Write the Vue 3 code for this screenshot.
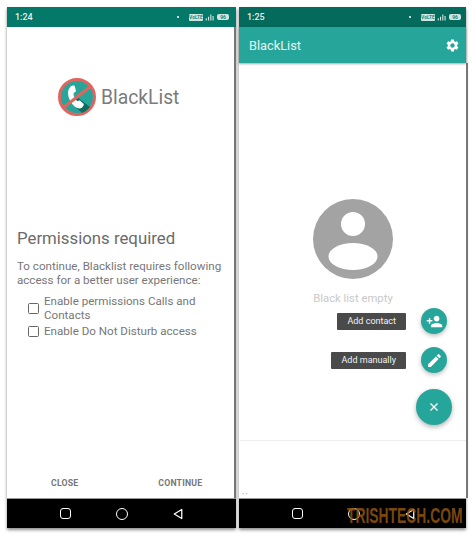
<script setup>
  const permissions = [
    'Enable permissions Calls and Contacts',
    'Enable Do Not Disturb access'
  ];

  const fabActions = [
    { label: 'Add contact', icon: 'person' },
    { label: 'Add manually', icon: 'pencil' }
  ];
</script>

<template>
  <main class="page">
    <section class="phone phone-left">
      <header class="status">
        <span class="time">1:24</span>
        <span class="status-icons">
          <i class="dot"></i>
          <i class="volte">VoLTE</i>
          <svg class="signal" viewBox="0 0 12 10"><path d="M1 9h1.500V6H1zM4 9h1.500V4H4zM7 9h1.500V1H7zM10 9h1.500V3H10z" fill="#cfe5e0"/></svg>
          <i class="battery">96</i>
        </span>
      </header>

      <div class="perm-body">
        <div class="brand">
          <svg class="logo" viewBox="0 0 38 38">
            <circle cx="19" cy="19" r="17.500" fill="#26a69a" stroke="#e0655f" stroke-width="3"/>
            <path d="M19 19 L32 29 A17 17 0 0 1 24 35 L12 24 Z" fill="#0c6e60"/>
            <path d="M12.500 8.500c1.500-1 3.500-1.300 4.200-.6l1.200 4.800c.1.700-.4 1.200-2.200 2.300-.6 2 1 6 3.500 8 1.800-.7 2.500-.8 3-.3l3.600 3.400c.2 1-.6 2.700-2 3.700-2 1.300-5 .8-8-2-3.800-3.700-6-9-5.700-14 .1-1.800 1-3.400 2.400-5.300z" fill="#fff"/>
            <path d="M5.500 29.500 L32.500 8.500" stroke="#e0655f" stroke-width="3"/>
          </svg>
          <span class="brand-name">BlackList</span>
        </div>

        <h1 class="perm-title">Permissions required</h1>
        <p class="perm-text">To continue, Blacklist requires following access for a better user experience:</p>

        <ul class="perm-list">
          <li v-for="item in permissions" :key="item" class="perm-item">
            <span class="checkbox"></span>
            <span>{{ item }}</span>
          </li>
        </ul>

        <div class="perm-actions">
          <span>CLOSE</span>
          <span>CONTINUE</span>
        </div>
      </div>

      <nav class="navbar">
        <span class="nav-square"></span>
        <span class="nav-circle"></span>
        <svg class="nav-back" viewBox="0 0 12 14"><path d="M10.500 1.500v11L1.500 7z" fill="none" stroke="#fff" stroke-width="1.500" stroke-linejoin="round"/></svg>
      </nav>
    </section>

    <section class="phone phone-right">
      <header class="status status-dim">
        <span class="time">1:25</span>
        <span class="status-icons">
          <i class="dot"></i>
          <i class="volte">VoLTE</i>
          <svg class="signal" viewBox="0 0 12 10"><path d="M1 9h1.500V6H1zM4 9h1.500V4H4zM7 9h1.500V1H7zM10 9h1.500V3H10z" fill="#cfe5e0"/></svg>
          <i class="battery">96</i>
        </span>
      </header>

      <div class="appbar">
        <span class="appbar-title">BlackList</span>
        <svg class="gear" viewBox="0 0 24 24"><path fill="#fff" d="M19.140 12.940c.04-.3.060-.61.060-.94s-.02-.64-.07-.94l2.030-1.580a.49.490 0 0 0 .12-.61l-1.920-3.320a.49.490 0 0 0-.59-.22l-2.390.96a7.030 7.030 0 0 0-1.620-.94l-.36-2.540a.48.480 0 0 0-.48-.41h-3.840a.47.470 0 0 0-.47.410l-.36 2.540c-.59.240-1.130.57-1.620.94l-2.390-.96a.48.480 0 0 0-.59.220L2.740 8.870a.47.470 0 0 0 .12.610l2.030 1.580c-.05.3-.09.630-.09.940s.02.640.07.940l-2.030 1.580a.49.490 0 0 0-.12.610l1.920 3.320c.12.220.37.290.59.220l2.390-.96c.5.380 1.030.7 1.620.94l.36 2.540c.05.240.24.410.48.410h3.840c.24 0 .44-.17.470-.41l.36-2.540c.59-.24 1.130-.56 1.620-.94l2.390.96c.22.080.47 0 .59-.22l1.920-3.320a.47.470 0 0 0-.12-.61l-2.010-1.580zM12 15.600A3.610 3.610 0 0 1 8.400 12c0-1.980 1.620-3.600 3.600-3.600s3.600 1.620 3.600 3.600-1.620 3.600-3.600 3.600z"/></svg>
      </div>

      <div class="list-body">
        <svg class="avatar" viewBox="0 0 80 80">
          <circle cx="40" cy="40" r="40" fill="#a3a3a3"/>
          <circle cx="40" cy="25" r="12" fill="#fff"/>
          <ellipse cx="40" cy="57.500" rx="24.500" ry="13.500" fill="#fff"/>
        </svg>
        <p class="empty-text">Black list empty</p>

        <div class="fab-menu">
          <div v-for="action in fabActions" :key="action.label" class="fab-row">
            <span class="chip">{{ action.label }}</span>
            <span class="fab-mini">
              <svg v-if="action.icon === 'person'" viewBox="0 0 24 24"><path fill="#fff" d="M15 12c2.200 0 4-1.800 4-4s-1.800-4-4-4-4 1.800-4 4 1.800 4 4 4zm-9-2V7H4v3H1v2h3v3h2v-3h3v-2H6zm9 4c-2.700 0-8 1.300-8 4v2h16v-2c0-2.700-5.300-4-8-4z"/></svg>
              <svg v-else viewBox="0 0 24 24"><path fill="#fff" d="M3 17.250V21h3.750L17.810 9.940l-3.750-3.750L3 17.250zM20.710 7.040a1 1 0 0 0 0-1.410l-2.340-2.340a1 1 0 0 0-1.410 0l-1.830 1.830 3.750 3.750 1.830-1.830z"/></svg>
            </span>
          </div>
          <span class="fab-main">
            <svg viewBox="0 0 24 24"><path d="M6 6l12 12M18 6L6 18" stroke="#fff" stroke-width="2.400"/></svg>
          </span>
        </div>

        <div class="list-foot">
          <span class="foot-dots">• •</span>
        </div>
      </div>

      <nav class="navbar">
        <span class="nav-square"></span>
        <span class="nav-circle"></span>
        <svg class="nav-back" viewBox="0 0 12 14"><path d="M10.500 1.500v11L1.500 7z" fill="none" stroke="#fff" stroke-width="1.500" stroke-linejoin="round"/></svg>
        <span class="watermark">TRISHTECH.COM</span>
      </nav>
    </section>
  </main>
</template>

<style scoped>
  .page {
    width: 474px;
    height: 536px;
    box-sizing: border-box;
    padding: 7px 8px 8px 7px;
    display: flex;
    background: #fff;
    font-family: Roboto, "Liberation Sans", sans-serif;
    overflow: hidden;
  }

  .phone {
    display: flex;
    flex-direction: column;
    height: 521px;
    background: #fff;
    box-shadow: 0 2px 3px rgba(0, 0, 0, 0.45);
  }

  .phone-left {
    width: 229px;
  }

  .phone-right {
    width: 227px;
    margin-left: 3px;
    position: relative;
  }

  .status {
    height: 20px;
    flex: none;
    display: flex;
    align-items: center;
    justify-content: space-between;
    padding: 0 7px 0 8px;
    background: #04796a;
    color: #e4f1ee;
    font-size: 9px;
    font-weight: 500;
  }

  .status-dim {
    background: #036a5c;
    padding: 0 5px 0 8px;
  }

  .status-icons {
    display: flex;
    align-items: center;
    gap: 2px;
  }

  .dot {
    width: 2px;
    height: 2px;
    margin-right: 8px;
    border-radius: 50%;
    background: #fff;
  }

  .volte {
    width: 14px;
    height: 7px;
    font-size: 5px;
    line-height: 7px;
    font-style: normal;
    text-align: center;
    overflow: hidden;
    color: #04796a;
    background: #cfe5e0;
    border-radius: 1px;
  }

  .signal {
    width: 9px;
    height: 9px;
  }

  .battery {
    width: 12px;
    height: 6px;
    margin-left: 1px;
    font-size: 5px;
    line-height: 6px;
    font-style: normal;
    text-align: center;
    color: #04796a;
    background: #cfe5e0;
    border-radius: 2px;
  }

  .perm-body {
    flex: 1;
    display: flex;
    flex-direction: column;
    border-right: 2px solid #777;
    padding: 51px 0 0 10px;
    color: #6e6e6e;
  }

  .brand {
    display: flex;
    align-items: center;
    gap: 5px;
    margin-left: 41px;
    height: 38px;
  }

  .logo {
    width: 38px;
    height: 38px;
  }

  .brand-name {
    font-size: 19.300px;
    color: #7b7b7b;
  }

  .perm-title {
    margin: 111px 0 0;
    font-size: 16.800px;
    font-weight: 400;
    line-height: 22px;
    color: #6b6b6b;
  }

  .perm-text {
    margin: 11px 0 0;
    width: 212px;
    font-size: 11.600px;
    line-height: 13.500px;
    color: #777;
  }

  .perm-list {
    list-style: none;
    margin: 8px 0 0;
    padding: 0 0 0 11px;
    font-size: 11.600px;
    line-height: 13.500px;
    color: #777;
  }

  .perm-item {
    display: flex;
    align-items: center;
    gap: 5px;
    margin-bottom: 3px;
    width: 172px;
  }

  .checkbox {
    width: 9px;
    height: 9px;
    flex: none;
    border: 1.500px solid #666;
    border-radius: 1.500px;
  }

  .perm-actions {
    margin-top: auto;
    height: 20px;
    display: flex;
    gap: 80px;
    padding-left: 34px;
    font-size: 8.700px;
    font-weight: 700;
    letter-spacing: 0.2px;
    color: #777;
    align-items: flex-start;
  }

  .navbar {
    height: 30px;
    flex: none;
    display: flex;
    align-items: center;
    background: #000;
    position: relative;
    border-top: 1px solid #999;
    box-sizing: border-box;
  }

  .nav-square {
    width: 9px;
    height: 9px;
    margin-left: 53px;
    border: 1.500px solid #fff;
    border-radius: 3px;
  }

  .nav-circle {
    width: 10px;
    height: 10px;
    margin-left: 45px;
    border: 1.500px solid #fff;
    border-radius: 50%;
  }

  .nav-back {
    width: 10px;
    height: 12px;
    margin-left: 45px;
  }

  .watermark {
    position: absolute;
    left: 108px;
    top: 6px;
    font-family: "Liberation Sans", sans-serif;
    font-size: 22px;
    line-height: 22px;
    font-weight: 700;
    color: #8f5412;
    opacity: 0.85;
    transform: scaleX(0.63);
    transform-origin: left center;
    white-space: nowrap;
  }

  .appbar {
    height: 36px;
    flex: none;
    display: flex;
    align-items: center;
    justify-content: space-between;
    padding: 0 6px 0 10px;
    background: #26a69a;
    box-shadow: 0 1px 2px rgba(0, 0, 0, 0.35);
    color: #e4f4f2;
    z-index: 1;
  }

  .appbar-title {
    font-size: 12.800px;
  }

  .gear {
    width: 15px;
    height: 15px;
  }

  .list-body {
    flex: 1;
    position: relative;
    display: flex;
    flex-direction: column;
    align-items: center;
    margin-right: -2px;
    border-right: 2px solid #777;
    padding: 136px 0 0 1px;
  }

  .avatar {
    width: 80px;
    height: 80px;
  }

  .empty-text {
    margin: 13px 0 0;
    font-size: 11.300px;
    line-height: 14px;
    color: #c9c9c9;
  }

  .fab-menu {
    position: absolute;
    right: 14px;
    top: 245px;
    display: flex;
    flex-direction: column;
    align-items: flex-end;
    gap: 13px;
  }

  .fab-row {
    display: flex;
    align-items: center;
    gap: 15px;
    margin-right: 5px;
  }

  .chip {
    height: 17px;
    padding: 0 10px;
    font-size: 9px;
    line-height: 17px;
    color: #f2f2f2;
    background: #4a4a4a;
    border-radius: 1px;
  }

  .fab-mini {
    width: 26px;
    height: 26px;
    display: flex;
    align-items: center;
    justify-content: center;
    background: #26a69a;
    border-radius: 50%;
    box-shadow: 0 2px 4px rgba(0, 0, 0, 0.25);
  }

  .fab-mini svg {
    width: 17px;
    height: 17px;
  }

  .fab-main {
    width: 36px;
    height: 36px;
    margin-top: 3px;
    display: flex;
    align-items: center;
    justify-content: center;
    background: #26a69a;
    border-radius: 50%;
    box-shadow: 0 2px 5px rgba(0, 0, 0, 0.3);
  }

  .fab-main svg {
    width: 14px;
    height: 14px;
  }

  .list-foot {
    align-self: stretch;
    margin-top: auto;
    height: 57px;
    border-top: 1px solid #eeeeee;
    display: flex;
    align-items: flex-end;
    padding-left: 2px;
  }

  .foot-dots {
    font-size: 6px;
    line-height: 8px;
    color: #80b8b0;
  }
</style>
